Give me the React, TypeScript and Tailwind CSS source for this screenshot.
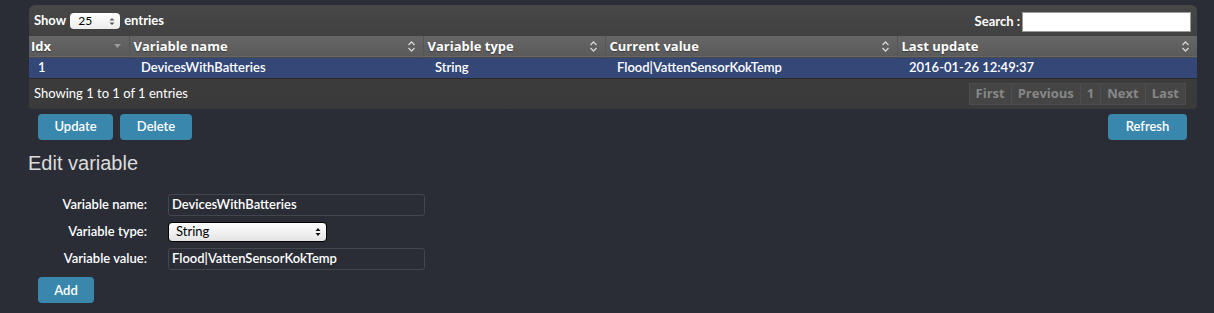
import React from 'react'

const font = { fontFamily: 'Lato, "Open Sans", sans-serif' }
const boldFont = { fontFamily: '"Open Sans", Lato, sans-serif' }

function SortIcon({ active }: { active?: boolean }) {
  if (active) {
    return (
      <svg width="9" height="6" viewBox="0 0 9 6" className="shrink-0">
        <path d="M1 1h7L4.5 5z" fill="#9a9a9a" />
      </svg>
    )
  }
  return (
    <svg width="9" height="13" viewBox="0 0 9 13" className="shrink-0">
      <path d="M1.5 5L4.5 2l3 3M1.5 8l3 3 3-3" fill="none" stroke="#d6d6d6" strokeWidth="1.3" />
    </svg>
  )
}

const columns = [
  { title: 'Idx', w: 'w-[100px]', active: true },
  { title: 'Variable name', w: 'w-[294px]' },
  { title: 'Variable type', w: 'w-[182px]' },
  { title: 'Current value', w: 'w-[292px]' },
  { title: 'Last update', w: '' },
]

const row = ['1', 'DevicesWithBatteries', 'String', 'Flood|VattenSensorKokTemp', '2016-01-26 12:49:37']

function Btn({ children, w }: { children: React.ReactNode; w: string }) {
  return (
    <button
      className={`${w} h-[26px] rounded-[4px] bg-[#3a87ad] text-white text-[13px] font-semibold`}
      style={font}
    >
      {children}
    </button>
  )
}

export default function App() {
  return (
    <div className="min-h-screen w-[1214px] bg-[#2b2d36] pl-[29px] pr-[17px] pt-[5px]" style={font}>
      {/* table wrapper */}
      <div className="rounded-t-[6px] rounded-b-[4px] bg-gradient-to-b from-[#474747] via-[#3d3d3d] to-[#3a3a3a] overflow-hidden">
        <div className="h-[31px] flex items-center justify-between pl-[5px] pr-[6px] text-[13px] font-bold text-white">
          <div className="flex items-center gap-[4px]">
            <span>Show</span>
            <div className="relative w-[50px] h-[16px] rounded-[4px] bg-gradient-to-b from-white to-[#ececec] text-black text-[12px] font-normal flex items-center pl-[8px]">
              25
              <svg width="6" height="9" viewBox="0 0 6 9" className="absolute right-[5px] top-[4px]">
                <path d="M0.5 3.5L3 1l2.5 2.5zM0.5 5.5L3 8l2.5-2.5z" fill="#555" />
              </svg>
            </div>
            <span>entries</span>
          </div>
          <div className="flex items-center gap-[2px] pt-[2px]">
            <span>Search :</span>
            <div className="w-[169px] h-[20px] bg-white border border-[#9a9a9a]" />
          </div>
        </div>
        <table className="w-full border-collapse text-white">
          <thead>
            <tr className="h-[21px] bg-gradient-to-b from-[#666666] to-[#5a5a5a] border-b border-[#4a4a4a]">
              {columns.map((c, i) => (
                <th
                  key={c.title}
                  className={`${c.w} p-0 text-left text-[13px] font-bold ${i > 0 ? 'border-l border-[#555]' : ''}`}
                  style={{ ...boldFont, textShadow: '0 1px 1px rgba(0,0,0,0.4)' }}
                >
                  <div className="flex items-center justify-between pl-[2px] pr-[7px]">
                    <span className={i === 0 ? '' : 'pl-[2px]'}>{c.title}</span>
                    <SortIcon active={c.active} />
                  </div>
                </th>
              ))}
            </tr>
          </thead>
          <tbody>
            <tr className="h-[21px] bg-[#344878] border-b border-[#2a2a2a]">
              {row.map((v, i) => (
                <td
                  key={i}
                  className={`p-0 text-[13px] font-semibold ${i === 0 ? 'pl-[9px]' : 'pl-[12px]'}`}
                >
                  {v}
                </td>
              ))}
            </tr>
          </tbody>
        </table>
        <div className="h-[30px] flex items-center justify-between pl-[5px] pr-[11px] text-[13px] text-white">
          <span>Showing 1 to 1 of 1 entries</span>
          <div
            className="flex h-[22px] border border-[#4d4d4d] bg-[#454545] text-[13px] font-bold text-[#878787]"
            style={boldFont}
          >
            {['First', 'Previous', '1', 'Next', 'Last'].map((p, i) => (
              <span
                key={p}
                className={`flex items-center px-[6px] ${i > 0 ? 'border-l border-[#4f4f4f]' : ''}`}
              >
                {p}
              </span>
            ))}
          </div>
        </div>
      </div>

      {/* buttons */}
      <div className="flex items-center justify-between pl-[9px] pr-[10px] mt-[5px]">
        <div className="flex gap-[7px]">
          <Btn w="w-[75px]">Update</Btn>
          <Btn w="w-[72px]">Delete</Btn>
        </div>
        <Btn w="w-[79px]">Refresh</Btn>
      </div>

      <h2
        className="mt-[11px] -ml-[1px] text-[20px] leading-[24px] text-[#dcdcdc]"
        style={{ fontFamily: '"Liberation Sans", Arial, sans-serif' }}
      >
        Edit variable
      </h2>

      {/* form */}
      <div className="mt-[19px] flex flex-col gap-[6px] text-[13px] text-white font-semibold">
        <div className="flex items-center">
          <label className="w-[118px] text-right">Variable name:</label>
          <div className="ml-[21px] w-[257px] h-[22px] rounded-[3px] border border-[#44464f] bg-[#2b2d36] flex items-center pl-[3px]">
            DevicesWithBatteries
          </div>
        </div>
        <div className="flex items-center">
          <label className="w-[118px] text-right">Variable type:</label>
          <div className="relative ml-[21px] w-[159px] h-[20px] rounded-[4px] border border-black bg-gradient-to-b from-white to-[#e4e4e4] text-black font-normal flex items-center pl-[7px]">
            String
            <svg width="6" height="10" viewBox="0 0 6 10" className="absolute right-[5px] top-[4px]">
              <path d="M0.5 4L3 1l2.5 3zM0.5 6L3 9l2.5-3z" fill="#111" />
            </svg>
          </div>
        </div>
        <div className="flex items-center">
          <label className="w-[118px] text-right">Variable value:</label>
          <div className="ml-[21px] w-[257px] h-[22px] rounded-[3px] border border-[#44464f] bg-[#2b2d36] flex items-center pl-[3px]">
            Flood|VattenSensorKokTemp
          </div>
        </div>
      </div>
      <div className="mt-[7px] pl-[9px]">
        <Btn w="w-[56px]">Add</Btn>
      </div>
    </div>
  )
}
